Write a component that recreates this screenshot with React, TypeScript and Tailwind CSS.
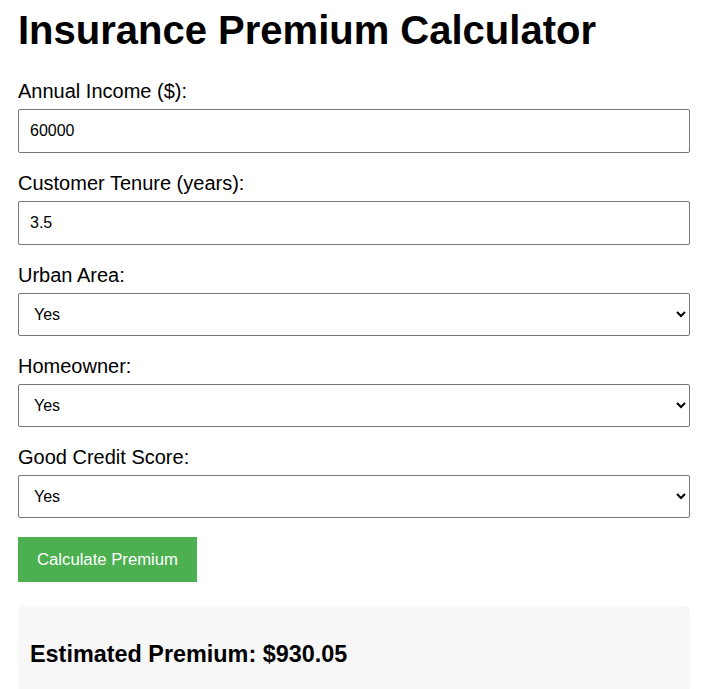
import React, { useState } from "react";

function Field({ label, children }: { label: string; children: React.ReactNode }) {
  return (
    <div className="mb-[19px]">
      <label className="block mb-[6px] text-[20px] leading-[23px]">{label}</label>
      {children}
    </div>
  );
}

function YesNo({ value, onChange }: { value: string; onChange: (v: string) => void }) {
  return (
    <select
      value={value}
      onChange={(e) => onChange(e.target.value)}
      className="block w-[672px] h-[43px] px-[11px] text-[16px] border border-[#767676] rounded-[2px] bg-white text-black appearance-auto"
      style={{ fontFamily: '"Liberation Sans", Arial, sans-serif' }}
    >
      <option value="yes">Yes</option>
      <option value="no">No</option>
    </select>
  );
}

export default function App() {
  const [income, setIncome] = useState("60000");
  const [tenure, setTenure] = useState("3.5");
  const [urban, setUrban] = useState("yes");
  const [home, setHome] = useState("yes");
  const [credit, setCredit] = useState("yes");

  return (
    <div
      className="px-[18px] pt-[7px] text-black bg-white min-h-[689px]"
      style={{ fontFamily: '"Liberation Sans", Arial, sans-serif' }}
    >
      <h1 className="text-[40px] font-bold leading-[46px] mb-[27px]">Insurance Premium Calculator</h1>
      <Field label="Annual Income ($):">
        <input
          value={income}
          onChange={(e) => setIncome(e.target.value)}
          className="block w-[672px] h-[44px] px-[11px] text-[16px] border border-[#767676] rounded-[2px]"
        />
      </Field>
      <Field label="Customer Tenure (years):">
        <input
          value={tenure}
          onChange={(e) => setTenure(e.target.value)}
          className="block w-[672px] h-[44px] px-[11px] text-[16px] border border-[#767676] rounded-[2px]"
        />
      </Field>
      <Field label="Urban Area:">
        <YesNo value={urban} onChange={setUrban} />
      </Field>
      <Field label="Homeowner:">
        <YesNo value={home} onChange={setHome} />
      </Field>
      <Field label="Good Credit Score:">
        <YesNo value={credit} onChange={setCredit} />
      </Field>
      <button className="block h-[45px] px-[19px] bg-[#4caf50] text-white text-[16.7px]">
        Calculate Premium
      </button>
      <div className="mt-[24px] w-[672px] bg-[#f7f7f7] rounded-[5px] px-[12px] pt-[35px] pb-[24px]">
        <h3 className="text-[23.4px] font-bold leading-[27px]">Estimated Premium: $930.05</h3>
      </div>
    </div>
  );
}
